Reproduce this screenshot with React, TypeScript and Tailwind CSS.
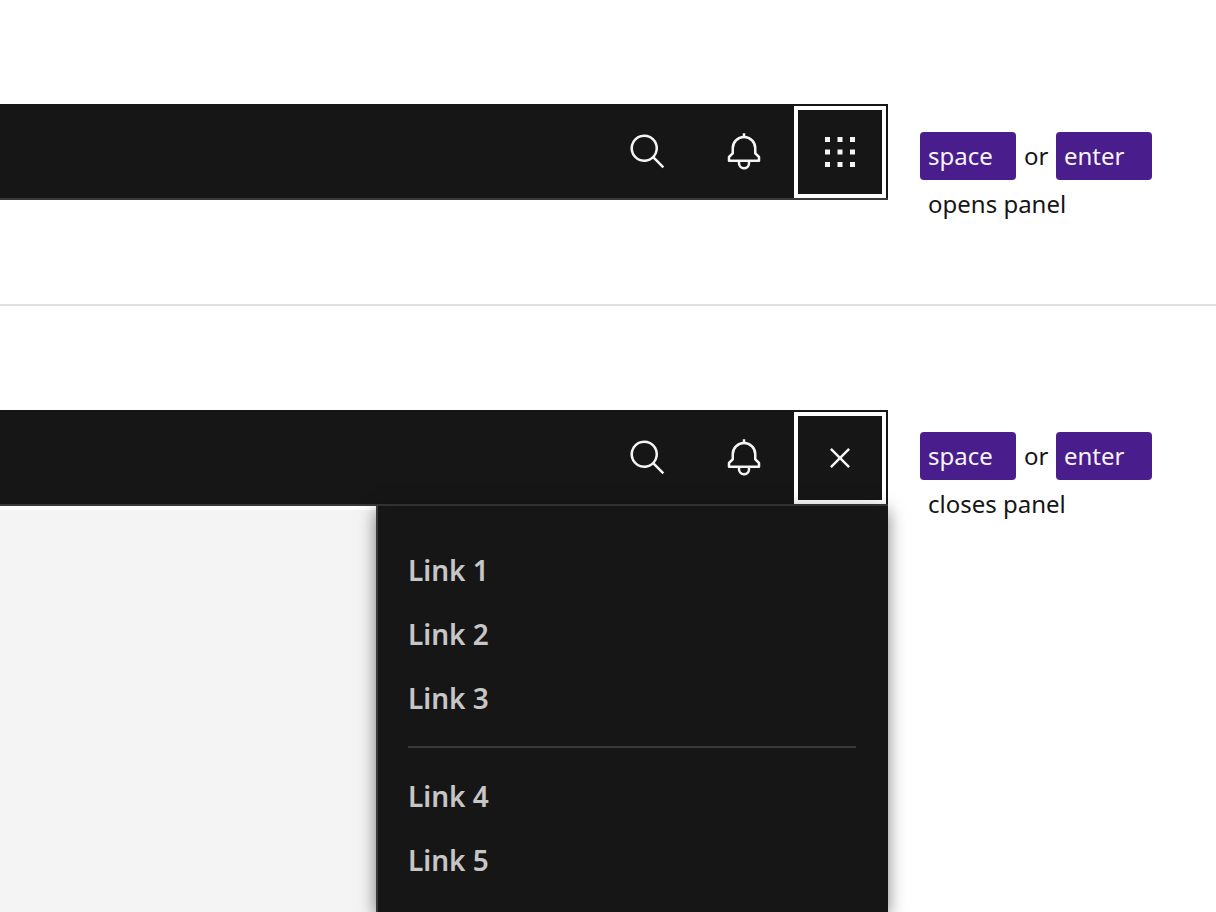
import type { ReactNode } from 'react';

const SEARCH =
  'M29,27.5859l-7.5521-7.5521a11.0177,11.0177,0,1,0-1.4141,1.4141L27.5859,29ZM4,13a9,9,0,1,1,9,9A9.01,9.01,0,0,1,4,13Z';
const BELL =
  'M28.7071,19.293,26,16.5859V13a10.0136,10.0136,0,0,0-9-9.9492V1H15V3.0508A10.0136,10.0136,0,0,0,6,13v3.5859L3.2929,19.293A1,1,0,0,0,3,20v3a1,1,0,0,0,1,1h7v.7768a5.152,5.152,0,0,0,4.5,5.1987A5.0057,5.0057,0,0,0,21,25V24h7a1,1,0,0,0,1-1V20A1,1,0,0,0,28.7071,19.293ZM19,25a3,3,0,0,1-6,0V24h6Zm8-3H5V20.4141L7.707,17.707A1,1,0,0,0,8,17V13a8,8,0,0,1,16,0v4a1,1,0,0,0,.293.707L27,20.4141Z';
const SWITCHER =
  'M14 4H18V8H14zM4 4H8V8H4zM24 4H28V8H24zM14 14H18V18H14zM4 14H8V18H4zM24 14H28V18H24zM14 24H18V28H14zM4 24H8V28H4zM24 24H28V28H24z';
const CLOSE =
  'M24 9.4L22.6 8 16 14.6 9.4 8 8 9.4 14.6 16 8 22.6 9.4 24 16 17.4 22.6 24 24 22.6 17.4 16 24 9.4z';

function Icon({ path }: { path: string }) {
  return (
    <svg viewBox="0 0 32 32" className="size-10 fill-[#f4f4f4]" aria-hidden="true">
      <path d={path} />
    </svg>
  );
}

function HeaderButton({ label, path, focused = false }: { label: string; path: string; focused?: boolean }) {
  return (
    <div className="flex w-24 px-0.5 pt-0.5">
      <button
        type="button"
        aria-label={label}
        className={
          focused
            ? 'flex flex-1 items-center justify-center border-4 border-white'
            : 'flex flex-1 items-center justify-center border-4 border-transparent'
        }
      >
        <Icon path={path} />
      </button>
    </div>
  );
}

function Header({ open }: { open: boolean }) {
  return (
    <header className="flex h-24 justify-end border-b-2 border-[#393939] bg-[#161616]">
      <HeaderButton label="Search" path={SEARCH} />
      <HeaderButton label="Notifications" path={BELL} />
      <HeaderButton label={open ? 'Close switcher' : 'Open switcher'} path={open ? CLOSE : SWITCHER} focused />
    </header>
  );
}

function Key({ children }: { children: ReactNode }) {
  return <kbd className="h-12 w-24 rounded bg-[#491d8b] px-2 font-[inherit] text-[#f4f4f4]">{children}</kbd>;
}

function Note({ action }: { action: string }) {
  return (
    <div className="text-2xl/12 text-[#161616]">
      <div className="flex">
        <Key>space</Key>
        <span className="w-10 pl-2">or</span>
        <Key>enter</Key>
      </div>
      <p className="pl-2">{action}</p>
    </div>
  );
}

function Links({ names }: { names: string[] }) {
  return (
    <ul>
      {names.map((name) => (
        <li key={name}>
          <a href="#" className="block h-16 text-[28px]/16 font-semibold text-[#c6c6c6]">
            {name}
          </a>
        </li>
      ))}
    </ul>
  );
}

export default function App() {
  return (
    <div className="flex min-h-screen flex-col bg-white font-['Noto_Sans',sans-serif]">
      <section className="flex border-b-2 border-[#e0e0e0] pt-26 pb-26">
        <div className="flex-1">
          <Header open={false} />
        </div>
        <aside className="-mb-8 w-82 pt-7 pl-8">
          <Note action="opens panel" />
        </aside>
      </section>
      <section className="flex flex-1 overflow-hidden pt-26">
        <div className="flex flex-1 flex-col">
          <Header open />
          <div className="flex flex-1">
            <main className="mt-1 flex-1 bg-[#f4f4f4]" />
            <nav
              aria-label="Switcher"
              className="w-128 border-l-2 border-[#393939] bg-[#161616] pt-8 pr-8 pb-5 pl-[30px] shadow-[0_4px_16px_rgba(0,0,0,0.5)]"
            >
              <Links names={['Link 1', 'Link 2', 'Link 3']} />
              <hr className="my-4 border-t-2 border-[#393939]" />
              <Links names={['Link 4', 'Link 5']} />
            </nav>
          </div>
        </div>
        <aside className="w-82 pt-[22px] pl-8">
          <Note action="closes panel" />
        </aside>
      </section>
    </div>
  );
}
